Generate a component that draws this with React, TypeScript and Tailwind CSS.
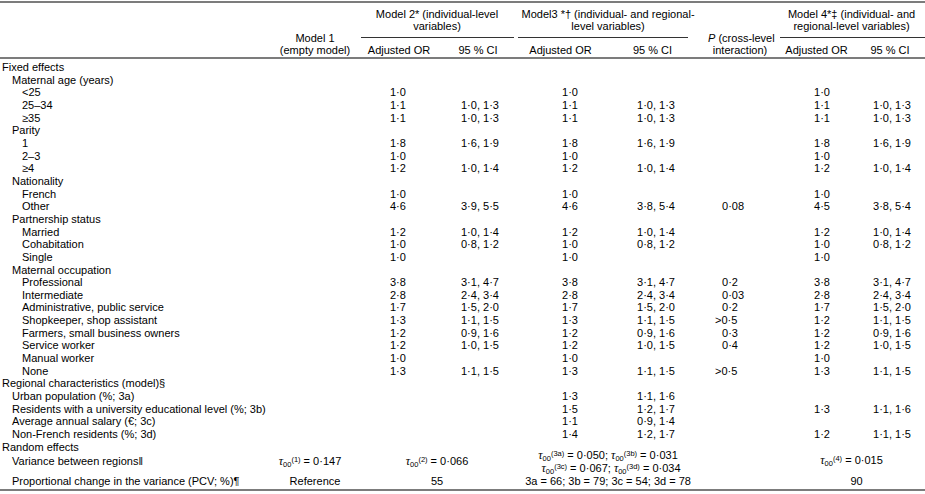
import React from 'react';
import clsx from 'clsx';

type Row = {
    label: React.ReactNode;
    level: 0 | 1 | 2;
    // m2 OR, m2 CI, m3 OR, m3 CI, P, m4 OR, m4 CI
    v?: [string, string, string, string, string, string, string];
};

const e = '';

const rows: Row[] = [
    { label: 'Fixed effects', level: 0 },
    { label: 'Maternal age (years)', level: 1 },
    { label: '<25', level: 2, v: ['1·0', e, '1·0', e, e, '1·0', e] },
    { label: '25–34', level: 2, v: ['1·1', '1·0, 1·3', '1·1', '1·0, 1·3', e, '1·1', '1·0, 1·3'] },
    { label: '≥35', level: 2, v: ['1·1', '1·0, 1·3', '1·1', '1·0, 1·3', e, '1·1', '1·0, 1·3'] },
    { label: 'Parity', level: 1 },
    { label: '1', level: 2, v: ['1·8', '1·6, 1·9', '1·8', '1·6, 1·9', e, '1·8', '1·6, 1·9'] },
    { label: '2–3', level: 2, v: ['1·0', e, '1·0', e, e, '1·0', e] },
    { label: '≥4', level: 2, v: ['1·2', '1·0, 1·4', '1·2', '1·0, 1·4', e, '1·2', '1·0, 1·4'] },
    { label: 'Nationality', level: 1 },
    { label: 'French', level: 2, v: ['1·0', e, '1·0', e, e, '1·0', e] },
    { label: 'Other', level: 2, v: ['4·6', '3·9, 5·5', '4·6', '3·8, 5·4', '0·08', '4·5', '3·8, 5·4'] },
    { label: 'Partnership status', level: 1 },
    { label: 'Married', level: 2, v: ['1·2', '1·0, 1·4', '1·2', '1·0, 1·4', e, '1·2', '1·0, 1·4'] },
    { label: 'Cohabitation', level: 2, v: ['1·0', '0·8, 1·2', '1·0', '0·8, 1·2', e, '1·0', '0·8, 1·2'] },
    { label: 'Single', level: 2, v: ['1·0', e, '1·0', e, e, '1·0', e] },
    { label: 'Maternal occupation', level: 1 },
    { label: 'Professional', level: 2, v: ['3·8', '3·1, 4·7', '3·8', '3·1, 4·7', '0·2', '3·8', '3·1, 4·7'] },
    { label: 'Intermediate', level: 2, v: ['2·8', '2·4, 3·4', '2·8', '2·4, 3·4', '0·03', '2·8', '2·4, 3·4'] },
    { label: 'Administrative, public service', level: 2, v: ['1·7', '1·5, 2·0', '1·7', '1·5, 2·0', '0·2', '1·7', '1·5, 2·0'] },
    { label: 'Shopkeeper, shop assistant', level: 2, v: ['1·3', '1·1, 1·5', '1·3', '1·1, 1·5', '>0·5', '1·2', '1·1, 1·5'] },
    { label: 'Farmers, small business owners', level: 2, v: ['1·2', '0·9, 1·6', '1·2', '0·9, 1·6', '0·3', '1·2', '0·9, 1·6'] },
    { label: 'Service worker', level: 2, v: ['1·2', '1·0, 1·5', '1·2', '1·0, 1·5', '0·4', '1·2', '1·0, 1·5'] },
    { label: 'Manual worker', level: 2, v: ['1·0', e, '1·0', e, e, '1·0', e] },
    { label: 'None', level: 2, v: ['1·3', '1·1, 1·5', '1·3', '1·1, 1·5', '>0·5', '1·3', '1·1, 1·5'] },
    { label: 'Regional characteristics (model)§', level: 0 },
    { label: 'Urban population (%; 3a)', level: 1, v: [e, e, '1·3', '1·1, 1·6', e, e, e] },
    { label: 'Residents with a university educational level (%; 3b)', level: 1, v: [e, e, '1·5', '1·2, 1·7', e, '1·3', '1·1, 1·6'] },
    { label: 'Average annual salary (€; 3c)', level: 1, v: [e, e, '1·1', '0·9, 1·4', e, e, e] },
    { label: 'Non-French residents (%; 3d)', level: 1, v: [e, e, '1·4', '1·2, 1·7', e, '1·2', '1·1, 1·5'] },
    { label: 'Random effects', level: 0 },
];

// left padding of the data in each value column
const padCls = ['pl-[32px]', 'pl-[21px]', 'pl-[46px]', 'pl-[32px]', 'pl-[22px]', 'pl-[36px]', 'pl-[18px]'];
const indentCls = ['pl-[2px]', 'pl-[12px]', 'pl-[22px]'];

const Tau: React.FC<{ sup: string; value: string }> = ({ sup, value }) => (
    <span className="whitespace-nowrap">
        <span className="font-['Liberation_Serif',serif] italic text-[12px] leading-none">τ</span>
        <sub className="text-[7.5px] leading-none">00</sub>
        <sup className="text-[7.5px] leading-none">({sup})</sup> = {value}
    </span>
);

const rule = 'border-[#7c7c7c]';
const subHead = clsx('border-b-2 p-0 pt-[6px] pb-[1px] font-normal text-center', rule);

export default function App() {
    return (
        <div className="w-[925px] bg-white pt-[1px] text-black font-['Liberation_Sans',Arial,sans-serif] text-[11px]">
            <div className={clsx('border-t-2', rule)} />
            <table className="w-[925px] table-fixed border-separate border-spacing-0">
                <colgroup>
                    <col className="w-[272px]" />
                    <col className="w-[86px]" />
                    <col className="w-[82px]" />
                    <col className="w-[76px]" />
                    <col className="w-[89px]" />
                    <col className="w-[95px]" />
                    <col className="w-[78px]" />
                    <col className="w-[77px]" />
                    <col className="w-[70px]" />
                </colgroup>
                <thead className="leading-[12px]">
                    <tr>
                        <th rowSpan={2} className={clsx('border-b-2 p-0', rule)} />
                        <th rowSpan={2} className={clsx('border-b-2 p-0 pb-[1px] align-bottom font-normal text-center', rule)}>
                            Model 1<br />(empty model)
                        </th>
                        <th colSpan={2} className="p-0 pt-[5px] font-normal text-center align-top">
                            Model 2* (individual-level<br />variables)
                            <div className="mt-[5px] ml-[3px] mr-[2px] border-b border-[#333]" />
                        </th>
                        <th colSpan={2} className="p-0 pt-[5px] font-normal text-center align-top">
                            Model3 *† (individual- and regional-<br />level variables)
                            <div className="mt-[5px] ml-[2px] mr-[12px] border-b border-[#333]" />
                        </th>
                        <th rowSpan={2} className={clsx('border-b-2 p-0 pb-[1px] align-bottom font-normal', rule)}>
                            <div className="ml-[8px] w-[64px] text-center whitespace-nowrap">
                                <i>P</i> (cross-level<br />interaction)
                            </div>
                        </th>
                        <th colSpan={2} className="p-0 pt-[5px] font-normal text-center align-top">
                            Model 4*‡ (individual- and<br />regional-level variables)
                            <div className="mt-[5px] ml-[2px] border-b border-[#333]" />
                        </th>
                    </tr>
                    <tr>
                        <th className={subHead}>Adjusted OR</th>
                        <th className={subHead}>95 % CI</th>
                        <th className={subHead}>Adjusted OR</th>
                        <th className={subHead}>95 % CI</th>
                        <th className={subHead}>Adjusted OR</th>
                        <th className={subHead}>95 % CI</th>
                    </tr>
                </thead>
                <tbody className="leading-[12.66px]">
                    <tr>
                        <td colSpan={9} className="h-[2px] p-0" />
                    </tr>
                    {rows.map((row, i) => (
                        <tr key={i}>
                            <td className={clsx('p-0 whitespace-nowrap', indentCls[row.level])}>{row.label}</td>
                            <td className="p-0" />
                            {(row.v ?? [e, e, e, e, e, e, e]).map((val, j) => (
                                <td key={j} className={clsx('p-0 whitespace-nowrap', padCls[j])}>
                                    {val.startsWith('>') ? <span className="-ml-[7px]">{val}</span> : val}
                                </td>
                            ))}
                        </tr>
                    ))}
                    <tr>
                        <td className="h-[21px] p-0 pt-[2px] pl-[12px] whitespace-nowrap align-top">Variance between regionsǁ</td>
                        <td className="p-0 pt-[2px] align-top text-center pr-[10px]">
                            <Tau sup="1" value="0·147" />
                        </td>
                        <td colSpan={2} className="p-0 pt-[2px] align-top text-center">
                            <Tau sup="2" value="0·066" />
                        </td>
                        <td colSpan={2} className="p-0 align-top text-center">
                            <div className="-mt-[4px] leading-[13px]">
                                <div><Tau sup="3a" value="0·050" />; <Tau sup="3b" value="0·031" /></div>
                                <div className="pl-[6px]"><Tau sup="3c" value="0·067" />; <Tau sup="3d" value="0·034" /></div>
                            </div>
                        </td>
                        <td className="p-0" />
                        <td colSpan={2} className="p-0 pt-[1px] align-top text-center">
                            <Tau sup="4" value="0·015" />
                        </td>
                    </tr>
                    <tr>
                        <td className="p-0 pl-[12px] whitespace-nowrap">Proportional change in the variance (PCV; %)¶</td>
                        <td className="p-0 text-center">Reference</td>
                        <td colSpan={2} className="p-0 text-center">55</td>
                        <td colSpan={2} className="p-0 text-center whitespace-nowrap">3a = 66; 3b = 79; 3c = 54; 3d = 78</td>
                        <td className="p-0" />
                        <td colSpan={2} className="p-0 text-center pl-[10px]">90</td>
                    </tr>
                    <tr>
                        <td colSpan={9} className="h-[1px] p-0" />
                    </tr>
                </tbody>
            </table>
            <div className={clsx('border-t-2', rule)} />
        </div>
    );
}
